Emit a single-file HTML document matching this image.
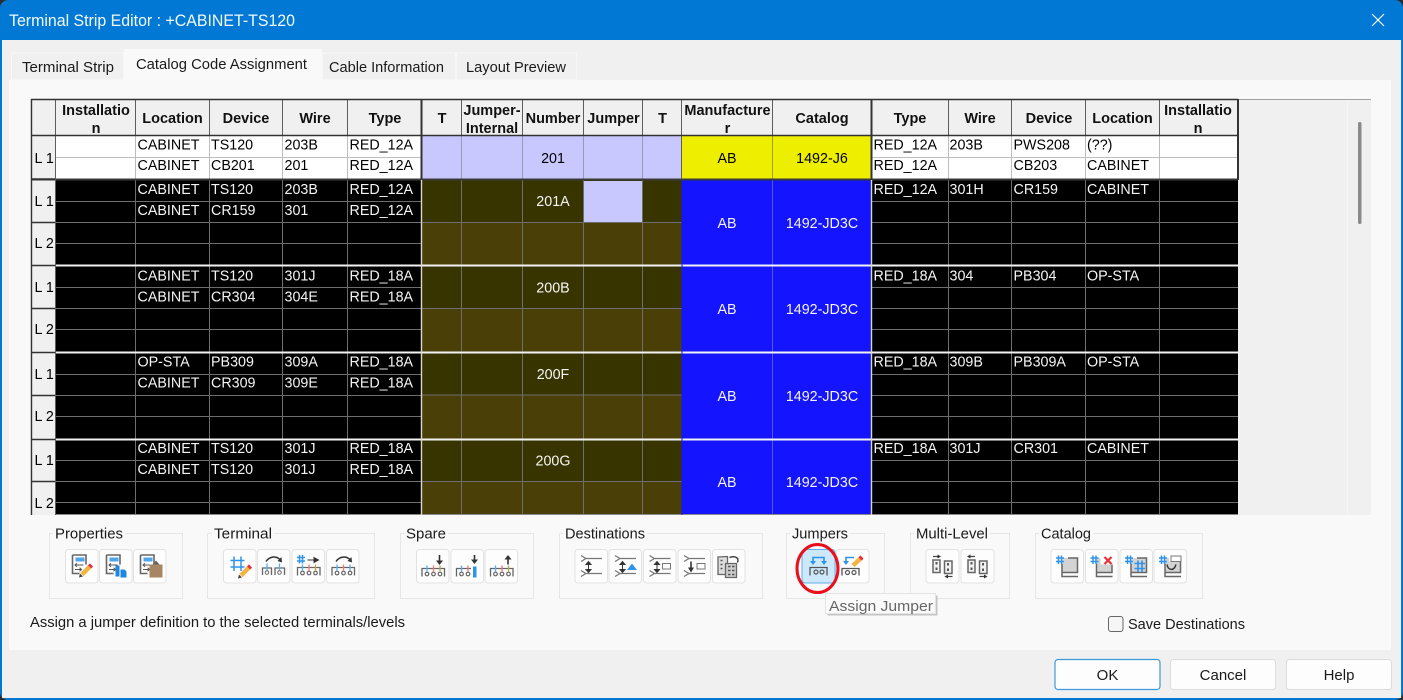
<!DOCTYPE html>
<html><head><meta charset="utf-8"><title>Terminal Strip Editor</title>
<style>
html,body{margin:0;padding:0;background:#2b2b2b;width:1403px;height:700px;overflow:hidden}
svg{display:block}
text{font-family:"Liberation Sans",sans-serif;font-size:14.3px;fill:#000;white-space:pre}
.w text{fill:#f4f4f4}
.h text{font-weight:bold;font-size:14.5px;text-anchor:middle;fill:#111}
.c{text-anchor:middle}
.ui text{font-size:15px;fill:#1a1a1a}
.btn{fill:#fdfdfd;stroke:#e2e2e2;stroke-width:1}
.box{fill:none;stroke:#e6e6e6;stroke-width:1}
.d{fill:none;stroke:#666;stroke-width:1.6}
.b{fill:none;stroke:#2f93ea;stroke-width:1.5}
</style></head><body>
<svg width="1403" height="700" viewBox="0 0 1403 700" xmlns="http://www.w3.org/2000/svg">
<defs>
<g id="doc"><path class="d" d="M7 5.500H20.500V15M7 5.500V24H14"/><rect x="10" y="8" width="9" height="4" fill="#4ea5ea"/><path d="M9.500 15.500H18M11.500 13.800L9.500 15.500 11.500 17.200M9.500 20H16M14 18.300L16 20 14 21.700" fill="none" stroke="#555" stroke-width="1"/></g>
<g id="pen"><path d="M16.500 25L24 17.500" stroke="#f2b544" stroke-width="4.500" fill="none"/><path d="M24 17.500L26 15.500" stroke="#e8303a" stroke-width="4.500" fill="none"/><path d="M13.500 28L14.500 24 17.500 27Z" fill="#444"/></g>
<g id="s4"><path d="M5.500 26V18H28V26" fill="none" stroke="#666" stroke-width="1.300"/><circle cx="10.500" cy="23.500" r="1.800" fill="none" stroke="#666" stroke-width="1.200"/><circle cx="17" cy="23.500" r="1.800" fill="none" stroke="#666" stroke-width="1.200"/><circle cx="23.500" cy="23.500" r="1.800" fill="none" stroke="#666" stroke-width="1.200"/><path d="M10.500 15V21.500" stroke="#55aef0" stroke-width="1.300"/><path d="M17 15V21.500" stroke="#ec7c76" stroke-width="1.300"/></g>
<g id="dest"><path d="M6 6L11 9H27M6 12L11 9M6 21L11 24H27M6 27L11 24" fill="none" stroke="#777" stroke-width="1.300"/></g>
<g id="ud"><path d="M13.500 13V22M11 15L13.500 12 16 15ZM11 20L13.500 23 16 20Z" fill="#333" stroke="#333" stroke-width="1"/></g>
<g id="book"><rect x="11.500" y="8.500" width="15" height="14.500" fill="#d3d3d3"/><path d="M11 14V27H27M17 8.500H26.500V23H11.500" fill="none" stroke="#666" stroke-width="1.500"/></g>
<g id="hash"><path d="M5 8.500H13M5 12H13M7.500 6V14.500M10.500 6V14.500" fill="none" stroke="#2f93ea" stroke-width="1.500"/></g>
<g id="ml"><path d="M7 10.500H14V23H7ZM18.500 11.500H26V24H18.500Z" fill="#f2f2f2" stroke="#666" stroke-width="1.500"/><path d="M10.500 12.500V15M10.500 18V20.500M22 13.500V16M22 19V21.500" stroke="#555" stroke-width="2"/></g>
</defs>

<!-- window -->
<rect x="0" y="0" width="1403" height="700" rx="8" fill="#0078d4"/>
<rect x="2" y="40" width="1399" height="658" fill="#f0f0f0"/>
<text x="9" y="26" textLength="286" lengthAdjust="spacingAndGlyphs" style="font-size:16.500px;fill:#f4f9fd">Terminal Strip Editor : +CABINET-TS120</text>
<path d="M1372 14L1384 26M1384 14L1372 26" stroke="#fff" stroke-width="1.200" fill="none"/>

<!-- tabs / panel -->
<rect x="9" y="80" width="1382" height="570" fill="#f9f9f9"/>
<g fill="#f0f0f0" stroke="#f7f7f7"><rect x="11.500" y="53" width="112" height="27"/><rect x="322.500" y="53" width="133" height="27"/><rect x="456.500" y="53" width="120" height="27"/></g>
<rect x="124" y="49" width="198" height="32" fill="#f9f9f9"/>
<g class="ui">
<text x="22" y="72" textLength="92" lengthAdjust="spacingAndGlyphs">Terminal Strip</text>
<text x="136" y="69" textLength="171" lengthAdjust="spacingAndGlyphs">Catalog Code Assignment</text>
<text x="329" y="72" textLength="115" lengthAdjust="spacingAndGlyphs">Cable Information</text>
<text x="466" y="72" textLength="100" lengthAdjust="spacingAndGlyphs">Layout Preview</text>
</g>

<!-- grid bg -->
<rect x="30" y="99" width="1341" height="416" fill="#f0f0f0"/>
<path d="M1238 99.500H1371" stroke="#a0a0a0" stroke-width="1"/>
<path d="M1347.500 100V515" stroke="#f6f6f6"/>
<rect x="1358" y="122" width="3.500" height="102" rx="1.500" fill="#8a8a8a"/>

<!-- header row text -->
<g class="h">
<text x="96" y="115">Installatio</text><text x="96" y="133">n</text>
<text x="172.500" y="123">Location</text><text x="246" y="123">Device</text><text x="315" y="123">Wire</text><text x="385" y="123">Type</text>
<text x="442" y="123">T</text><text x="492" y="115">Jumper-</text><text x="492" y="133">Internal</text>
<text x="553" y="123">Number</text><text x="613.500" y="123">Jumper</text><text x="662.500" y="123">T</text>
<text x="727.500" y="115">Manufacture</text><text x="727.500" y="133">r</text><text x="822" y="123">Catalog</text>
<text x="910" y="123">Type</text><text x="980" y="123">Wire</text><text x="1049" y="123">Device</text><text x="1122.500" y="123">Location</text>
<text x="1198" y="115">Installatio</text><text x="1198" y="133">n</text>
</g>

<!-- white row -->
<rect x="56" y="136" width="365" height="43" fill="#fff"/>
<rect x="872" y="136" width="366" height="43" fill="#fff"/>
<rect x="422" y="136" width="260" height="43.500" fill="#c8c8ff"/>
<rect x="682" y="136" width="189" height="43.500" fill="#eeee00"/>
<path d="M56 157.500H421M872 157.500H1238" stroke="#bdbdbd" stroke-width="1"/>
<path d="M135.500 136V179M209.500 136V179M282.500 136V179M347.500 136V179M948.500 136V179M1011.500 136V179M1085.500 136V179M1159.500 136V179" stroke="#bdbdbd" stroke-width="1"/>
<path d="M461.500 136V179M522.500 136V179M583.500 136V179M642.500 136V179" stroke="#9a9ab0" stroke-width="1"/>
<path d="M772.500 136V179" stroke="#a0a000" stroke-width="1"/>

<!-- dark blocks -->
<rect x="56" y="180" width="365" height="335" fill="#000"/>
<rect x="872" y="180" width="366" height="335" fill="#000"/>
<g fill="#383400"><rect x="422" y="180" width="260" height="42.500"/><rect x="422" y="266" width="260" height="42.500"/><rect x="422" y="353" width="260" height="42"/><rect x="422" y="439" width="260" height="42.500"/></g>
<g fill="#4b3f08"><rect x="422" y="222.500" width="260" height="43"/><rect x="422" y="308.500" width="260" height="44"/><rect x="422" y="395" width="260" height="44"/><rect x="422" y="481.500" width="260" height="33"/></g>
<rect x="682" y="180" width="189" height="335" fill="#1414ff"/>
<rect x="584" y="181" width="58.500" height="41.500" fill="#c8c8ff"/>

<!-- rows lines -->
<path d="M56 201.500H421M56 222.500H421M56 243.500H421M56 287.500H421M56 308.500H421M56 329.500H421M56 374.500H421M56 395.500H421M56 416.500H421M56 460.500H421M56 481.500H421M56 502.500H421M872 201.500H1238M872 222.500H1238M872 243.500H1238M872 287.500H1238M872 308.500H1238M872 329.500H1238M872 374.500H1238M872 395.500H1238M872 416.500H1238M872 460.500H1238M872 481.500H1238M872 502.500H1238M422 222.500H682M422 308.500H682M422 395H682M422 481.500H682" stroke="#6e6e6e" stroke-width="1"/>
<path d="M135.500 180V515M209.500 180V515M282.500 180V515M347.500 180V515M948.500 180V515M1011.500 180V515M1085.500 180V515M1159.500 180V515M461.500 180V515M522.500 180V515M583.500 180V515M642.500 180V515" stroke="#6e6e6e" stroke-width="1"/>
<path d="M772.500 180V515" stroke="#5a5ad8" stroke-width="1"/>
<path d="M56 514.500H1238" stroke="#8a8a8a" stroke-width="1"/>
<path d="M32 179.500H871M872 179.500H1238" stroke="#3a3a3a" stroke-width="2"/>
<path d="M56 265.500H1238M56 352.500H1238M56 439.500H1238" stroke="#f2f2f2" stroke-width="2"/>

<!-- header and label grid -->
<path d="M55.500 99V515M135.500 99V135M209.500 99V135M282.500 99V135M347.500 99V135M461.500 99V135M522.500 99V135M583.500 99V135M642.500 99V135M681.500 99V179M772.500 99V135M948.500 99V135M1011.500 99V135M1085.500 99V135M1159.500 99V135" stroke="#5e5e5e" stroke-width="1"/>
<path d="M31 99.500H1238M31 135.500H1238M31.500 99V515M32 179H55M32 222.500H55M32 265.500H55M32 308.500H55M32 352.500H55M32 395.500H55M32 439.500H55M32 481.500H55" stroke="#333" stroke-width="1.400"/>
<path d="M421.500 99V180M871.500 99V180M1238 99V180" stroke="#333" stroke-width="2"/>
<path d="M421.500 180V515M871.500 180V515" stroke="#d8d8c8" stroke-width="1.400"/>
<path d="M682 180V515" stroke="#1414ff" stroke-width="1"/>

<!-- L labels -->
<g>
<text x="34.500" y="163">L 1</text>
<text x="34.500" y="206">L 1</text><text x="34.500" y="248">L 2</text>
<text x="34.500" y="292">L 1</text><text x="34.500" y="334">L 2</text>
<text x="34.500" y="379">L 1</text><text x="34.500" y="421">L 2</text>
<text x="34.500" y="465">L 1</text><text x="34.500" y="508">L 2</text>
</g>

<!-- white row text -->
<g>
<text x="137.500" y="149.500">CABINET</text><text x="211" y="149.500">TS120</text><text x="284.500" y="149.500">203B</text><text x="349.500" y="149.500">RED_12A</text>
<text x="137.500" y="170">CABINET</text><text x="211" y="170">CB201</text><text x="284.500" y="170">201</text><text x="349.500" y="170">RED_12A</text>
<text x="873.500" y="149.500">RED_12A</text><text x="949.500" y="149.500">203B</text><text x="1013.500" y="149.500">PWS208</text><text x="1087" y="149.500">(??)</text>
<text x="873.500" y="170">RED_12A</text><text x="1013.500" y="170">CB203</text><text x="1087" y="170">CABINET</text>
<text class="c" x="553" y="163">201</text><text class="c" x="727" y="163">AB</text><text class="c" x="822" y="163">1492-J6</text>
</g>

<!-- black row text -->
<g class="w">
<text x="137.500" y="194">CABINET</text><text x="211" y="194">TS120</text><text x="284.500" y="194">203B</text><text x="349.500" y="194">RED_12A</text>
<text x="137.500" y="215">CABINET</text><text x="211" y="215">CR159</text><text x="284.500" y="215">301</text><text x="349.500" y="215">RED_12A</text>
<text x="873.500" y="194">RED_12A</text><text x="949.500" y="194">301H</text><text x="1013.500" y="194">CR159</text><text x="1087" y="194">CABINET</text>
<text class="c" x="553" y="206">201A</text><text class="c" x="727" y="228">AB</text><text class="c" x="822" y="228">1492-JD3C</text>

<text x="137.500" y="280.500">CABINET</text><text x="211" y="280.500">TS120</text><text x="284.500" y="280.500">301J</text><text x="349.500" y="280.500">RED_18A</text>
<text x="137.500" y="301.500">CABINET</text><text x="211" y="301.500">CR304</text><text x="284.500" y="301.500">304E</text><text x="349.500" y="301.500">RED_18A</text>
<text x="873.500" y="280.500">RED_18A</text><text x="949.500" y="280.500">304</text><text x="1013.500" y="280.500">PB304</text><text x="1087" y="280.500">OP-STA</text>
<text class="c" x="553" y="292.500">200B</text><text class="c" x="727" y="314">AB</text><text class="c" x="822" y="314">1492-JD3C</text>

<text x="137.500" y="366.500">OP-STA</text><text x="211" y="366.500">PB309</text><text x="284.500" y="366.500">309A</text><text x="349.500" y="366.500">RED_18A</text>
<text x="137.500" y="387.500">CABINET</text><text x="211" y="387.500">CR309</text><text x="284.500" y="387.500">309E</text><text x="349.500" y="387.500">RED_18A</text>
<text x="873.500" y="366.500">RED_18A</text><text x="949.500" y="366.500">309B</text><text x="1013.500" y="366.500">PB309A</text><text x="1087" y="366.500">OP-STA</text>
<text class="c" x="553" y="379">200F</text><text class="c" x="727" y="401">AB</text><text class="c" x="822" y="401">1492-JD3C</text>

<text x="137.500" y="453">CABINET</text><text x="211" y="453">TS120</text><text x="284.500" y="453">301J</text><text x="349.500" y="453">RED_18A</text>
<text x="137.500" y="474">CABINET</text><text x="211" y="474">TS120</text><text x="284.500" y="474">301J</text><text x="349.500" y="474">RED_18A</text>
<text x="873.500" y="453">RED_18A</text><text x="949.500" y="453">301J</text><text x="1013.500" y="453">CR301</text><text x="1087" y="453">CABINET</text>
<text class="c" x="553" y="465.500">200G</text><text class="c" x="727" y="487">AB</text><text class="c" x="822" y="487">1492-JD3C</text>
</g>

<!-- group boxes -->
<g class="box">
<rect x="49.500" y="533.500" width="133" height="65"/><rect x="207.500" y="533.500" width="167" height="65"/><rect x="400.500" y="533.500" width="133" height="65"/><rect x="559.500" y="533.500" width="203" height="65"/><rect x="786.500" y="533.500" width="98" height="65"/><rect x="910.500" y="533.500" width="99" height="65"/><rect x="1035.500" y="533.500" width="167" height="65"/>
</g>
<g fill="#f9f9f9"><rect x="53" y="528" width="72" height="10"/><rect x="212" y="528" width="62" height="10"/><rect x="404" y="528" width="44" height="10"/><rect x="563" y="528" width="84" height="10"/><rect x="790" y="528" width="60" height="10"/><rect x="914" y="528" width="76" height="10"/><rect x="1039" y="528" width="54" height="10"/></g>
<g class="ui">
<text x="55" y="538.500" textLength="68" lengthAdjust="spacingAndGlyphs">Properties</text>
<text x="214" y="538.500" textLength="58" lengthAdjust="spacingAndGlyphs">Terminal</text>
<text x="406" y="538.500" textLength="40" lengthAdjust="spacingAndGlyphs">Spare</text>
<text x="565" y="538.500" textLength="80" lengthAdjust="spacingAndGlyphs">Destinations</text>
<text x="792" y="538.500" textLength="56" lengthAdjust="spacingAndGlyphs">Jumpers</text>
<text x="916" y="538.500" textLength="72" lengthAdjust="spacingAndGlyphs">Multi-Level</text>
<text x="1041" y="538.500" textLength="50" lengthAdjust="spacingAndGlyphs">Catalog</text>
<text x="30" y="627" textLength="375" lengthAdjust="spacingAndGlyphs">Assign a jumper definition to the selected terminals/levels</text>
<text x="1128" y="629" textLength="117" lengthAdjust="spacingAndGlyphs">Save Destinations</text>
</g>

<!-- Properties -->
<g transform="translate(65.500,549.500)"><rect class="btn" width="32.500" height="33.500" rx="3"/><use href="#doc"/><use href="#pen"/></g>
<g transform="translate(99.500,549.500)"><rect class="btn" width="32.500" height="33.500" rx="3"/><use href="#doc"/><rect x="16" y="16" width="4" height="11" fill="#1f86e0"/><path d="M21 20H25L27 22V28H21Z" fill="#1f86e0"/></g>
<g transform="translate(133.500,549.500)"><rect class="btn" width="32.500" height="33.500" rx="3"/><use href="#doc"/><rect x="16" y="15" width="13" height="13" fill="#a88663"/><path d="M19 15L22.500 11 26 15Z" fill="#666"/></g>

<!-- Terminal -->
<g transform="translate(223.500,549.500)"><rect class="btn" width="32.500" height="33.500" rx="3"/><path class="b" d="M7 11H21M7 17.500H21M10.500 7V21.500M17.500 7V21.500" stroke-width="1.600"/><use href="#pen" x="1" y="1"/></g>
<g transform="translate(257.500,549.500)"><rect class="btn" width="32.500" height="33.500" rx="3"/><path d="M8.500 12C12 7 18 6 22.500 10" fill="none" stroke="#333" stroke-width="1.500"/><path d="M24.500 13L20 11.500 24 7.500Z" fill="#333"/><path d="M5 25.500V18.500H14V25.500M17.500 25.500V18.500H27V25.500" fill="none" stroke="#666" stroke-width="1.300"/><circle cx="9.500" cy="23" r="1.800" fill="none" stroke="#666"/><circle cx="22" cy="23" r="1.800" fill="none" stroke="#666"/><path d="M9.500 14V21M22 14V21" stroke="#55aef0" stroke-width="1.300"/></g>
<g transform="translate(292,549.500)"><rect class="btn" width="32.500" height="33.500" rx="3"/><use href="#s4"/><use href="#hash" y="-0.500"/><path d="M15.500 10.500H24M22 8L26.500 10.500 22 13Z" fill="#333" stroke="#333"/><path d="M23.500 15V21.500" stroke="#b8a84a" stroke-width="1.300"/></g>
<g transform="translate(326.500,549.500)"><rect class="btn" width="32.500" height="33.500" rx="3"/><use href="#s4"/><path d="M23.500 15V21.500" stroke="#55aef0" stroke-width="1.300"/><path d="M9.500 12C13 7 19 6 23.500 10" fill="none" stroke="#333" stroke-width="1.500"/><path d="M25.500 13L21 11.500 25 7.500Z" fill="#333"/></g>

<!-- Spare -->
<g transform="translate(416.500,549.500)"><rect class="btn" width="32.500" height="33.500" rx="3"/><use href="#s4" y="1"/><path d="M23.500 16V22.500" stroke="#b8a84a" stroke-width="1.300"/><path d="M23 5.500V14" stroke="#333" stroke-width="1.600"/><path d="M19.500 11L23 15.500 26.500 11Z" fill="#333"/></g>
<g transform="translate(451,549.500)"><rect class="btn" width="32.500" height="33.500" rx="3"/><use href="#s4" y="1"/><rect x="20" y="15" width="9.500" height="14" fill="#fdfdfd"/><rect x="22" y="17" width="3.500" height="11" fill="#2f93ea"/><path d="M23.500 5.500V13" stroke="#333" stroke-width="1.600"/><path d="M20 10L23.500 14.500 27 10Z" fill="#333"/></g>
<g transform="translate(485,549.500)"><rect class="btn" width="32.500" height="33.500" rx="3"/><use href="#s4" y="1"/><path d="M23.500 16V22.500" stroke="#b8a84a" stroke-width="1.300"/><path d="M23 8V15" stroke="#333" stroke-width="1.600"/><path d="M19.500 10L23 5.500 26.500 10Z" fill="#333"/></g>

<!-- Destinations -->
<g transform="translate(575,549.500)"><rect class="btn" width="32.500" height="33.500" rx="3"/><use href="#dest"/><use href="#ud"/></g>
<g transform="translate(609,549.500)"><rect class="btn" width="32.500" height="33.500" rx="3"/><use href="#dest"/><use href="#ud"/><path d="M18 20.500L23 14 28 20.500Z" fill="#2f93ea"/></g>
<g transform="translate(643.500,549.500)"><rect class="btn" width="32.500" height="33.500" rx="3"/><use href="#dest"/><use href="#ud"/><rect x="19" y="14" width="8" height="5.500" fill="#fdfdfd" stroke="#777"/></g>
<g transform="translate(678,549.500)"><rect class="btn" width="32.500" height="33.500" rx="3"/><use href="#dest"/><path d="M13 12V20" stroke="#333" stroke-width="1.600"/><path d="M10 18L13 23 16 18Z" fill="#333"/><rect x="19" y="14" width="8" height="5.500" fill="#fdfdfd" stroke="#777"/></g>
<g transform="translate(712.500,549.500)"><rect class="btn" width="32.500" height="33.500" rx="3"/><path d="M5.500 7.500L15 7V25H5.500Z" fill="#ddd" stroke="#666" stroke-width="1.300"/><path d="M13 14H24V28H13Z" fill="#ccc" stroke="#666" stroke-width="1.300"/><path d="M15.500 17H18M19.500 17H22M15.500 21H18M19.500 21H22M15.500 25H18M19.500 25H22M8 11H10M8 15H10M8 19H10" stroke="#555" stroke-width="1.600"/><path d="M17 8C22 6 27 8 25 13" fill="none" stroke="#333" stroke-width="1.300"/></g>

<!-- Jumpers -->
<g transform="translate(802,549.500)"><rect width="33" height="33.500" rx="3" fill="#cde8fb" stroke="#5bb0ea"/><path d="M11 12V8H22V12" fill="none" stroke="#2f93ea" stroke-width="1.600"/><path d="M8 11.500L11 15.500 14 11.500ZM19 11.500L22 15.500 25 11.500Z" fill="#2f93ea"/><path d="M8 26V18H25V26" fill="none" stroke="#555" stroke-width="1.300"/><circle cx="14" cy="22.500" r="2" fill="none" stroke="#555" stroke-width="1.200"/><circle cx="20" cy="22.500" r="2" fill="none" stroke="#555" stroke-width="1.200"/></g>
<g transform="translate(836,549.500)"><rect class="btn" width="33" height="33.500" rx="3"/><path d="M10 12V8H18" fill="none" stroke="#2f93ea" stroke-width="1.600"/><path d="M7 11.500L10 15.500 13 11.500Z" fill="#2f93ea"/><path d="M6 26V19H23V26" fill="none" stroke="#555" stroke-width="1.300"/><circle cx="11.500" cy="23" r="2" fill="none" stroke="#555" stroke-width="1.200"/><circle cx="18" cy="23" r="2" fill="none" stroke="#555" stroke-width="1.200"/><path d="M17 16L24 9.500" stroke="#f2b544" stroke-width="4.500"/><path d="M24 9.500L26 7.500" stroke="#e8303a" stroke-width="4.500"/></g>

<!-- Multi-Level -->
<g transform="translate(926,549.500)"><rect class="btn" width="33" height="33.500" rx="3"/><use href="#ml"/><path d="M7 7H12.500" stroke="#444" stroke-width="1.200"/><path d="M11.500 5L15 7 11.500 9Z" fill="#333"/><path d="M21 27H26.500" stroke="#444" stroke-width="1.200"/><path d="M22 25L18.500 27 22 29Z" fill="#333"/></g>
<g transform="translate(961,549.500)"><rect class="btn" width="33" height="33.500" rx="3"/><use href="#ml"/><path d="M8.500 7H14" stroke="#444" stroke-width="1.200"/><path d="M9.500 5L6 7 9.500 9Z" fill="#333"/><path d="M18.500 27H24" stroke="#444" stroke-width="1.200"/><path d="M23 25L26.500 27 23 29Z" fill="#333"/></g>

<!-- Catalog -->
<g transform="translate(1051,549.500)"><rect class="btn" width="32.500" height="33.500" rx="3"/><use href="#book"/><use href="#hash"/></g>
<g transform="translate(1085.500,549.500)"><rect class="btn" width="32.500" height="33.500" rx="3"/><use href="#book"/><rect x="15" y="6" width="13" height="9" fill="#fdfdfd"/><use href="#hash"/><path d="M19 7.500L26 14.500M26 7.500L19 14.500" stroke="#e8303a" stroke-width="2.200"/></g>
<g transform="translate(1120,549.500)"><rect class="btn" width="32.500" height="33.500" rx="3"/><use href="#book"/><use href="#hash"/><path d="M14.500 14H25M14.500 19H25M18 11V22.500M22 11V22.500" fill="none" stroke="#2f93ea" stroke-width="1.600"/></g>
<g transform="translate(1154,549.500)"><rect class="btn" width="32.500" height="33.500" rx="3"/><use href="#book"/><rect x="15" y="6" width="13" height="6" fill="#fdfdfd"/><use href="#hash"/><rect x="17" y="6.500" width="10" height="5.500" fill="#fdfdfd" stroke="#777"/><path d="M13 15C14 21 20 22 22 15" fill="none" stroke="#333" stroke-width="1.400"/></g>

<!-- tooltip -->
<rect x="827.500" y="595.500" width="110" height="20" fill="#999" opacity=".55"/>
<rect x="825.500" y="593.500" width="110" height="20" fill="#fafafa" stroke="#e4e4e4"/>
<text x="829" y="611" textLength="104" lengthAdjust="spacingAndGlyphs" style="font-size:15px;fill:#666">Assign Jumper</text>

<!-- red circle -->
<ellipse cx="817.500" cy="568.500" rx="20.500" ry="24" fill="none" stroke="#e8101c" stroke-width="3"/>

<!-- checkbox -->
<rect x="1108.500" y="616.500" width="14.500" height="15" rx="2.500" fill="#f6f6f6" stroke="#666" stroke-width="1"/>

<!-- bottom buttons -->
<rect x="1055" y="659.500" width="105" height="30" rx="3" fill="#fdfdfd" stroke="#3d9ad8" stroke-width="1.200"/>
<rect x="1170.500" y="659.500" width="105" height="30" rx="3" fill="#fdfdfd" stroke="#dcdcdc"/>
<rect x="1286.500" y="659.500" width="105" height="30" rx="3" fill="#fdfdfd" stroke="#dcdcdc"/>
<g class="ui">
<text x="1107.500" y="680" text-anchor="middle">OK</text>
<text x="1223" y="680" text-anchor="middle">Cancel</text>
<text x="1339" y="680" text-anchor="middle">Help</text>
</g>
</svg>
</body></html>
